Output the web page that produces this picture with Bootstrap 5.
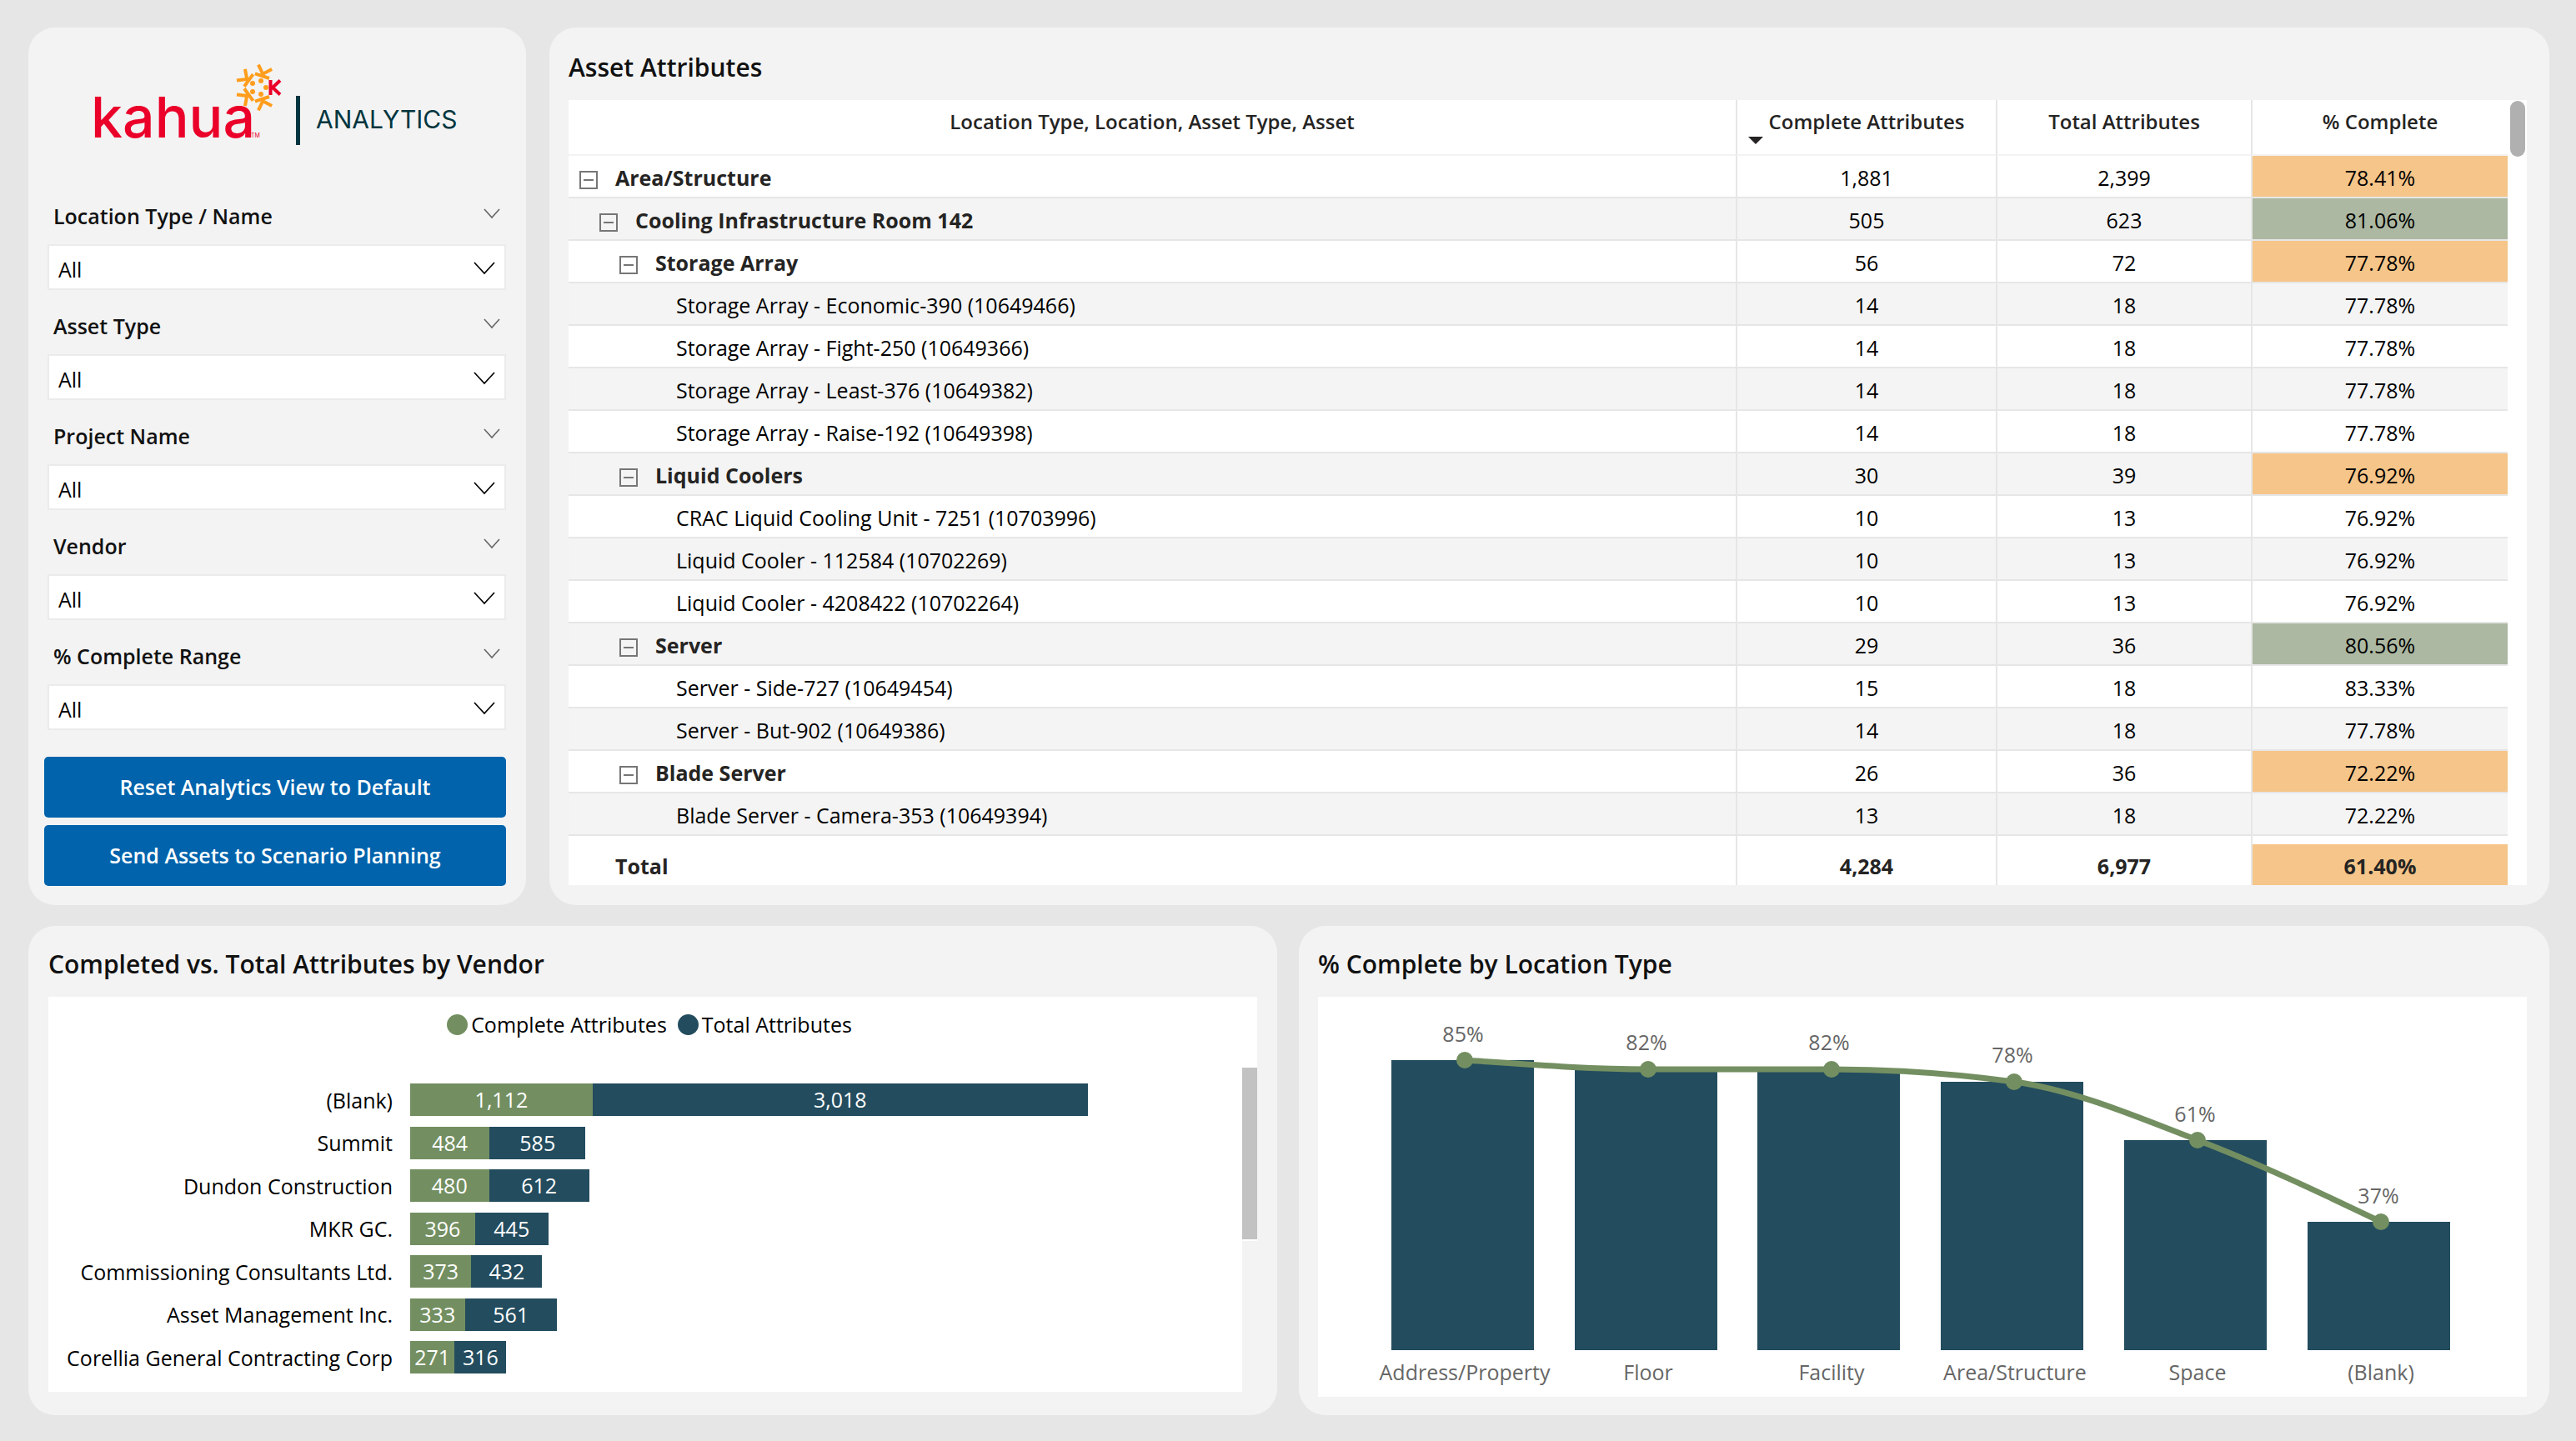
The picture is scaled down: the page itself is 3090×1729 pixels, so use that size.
<!DOCTYPE html>
<html lang="en">
<head>
<meta charset="utf-8">
<meta name="viewport" content="width=device-width, initial-scale=1">
<title>Kahua Analytics</title>
<link href="https://cdn.jsdelivr.net/npm/bootstrap@5.3.0/dist/css/bootstrap.min.css" rel="stylesheet">
<style>
  :root { --green: #738f61; --navy: #234c5e; --line: #e6e6e6; }
  body { background: #e6e6e6; color: #111; font-family: "Open Sans", "Noto Sans", sans-serif; font-size: 25px; line-height: 34px; }
  .page { padding: 33px 32px 31px 34px; }
  .top-row { gap: 28px; margin-bottom: 25px; }
  .bottom-row { gap: 26px; }
  .panel { background: #f3f3f3; border-radius: 32px; }
  .panel-title { margin: 0; font-size: 30px; line-height: 40px; font-weight: 600; color: #111; }
  .sidebar { width: 597px; flex: none; padding: 0 24px 23px 19px; }
  .brand-logo { display: block; height: 195px; width: 554px; }
  .filter { height: 132px; padding-left: 4px; }
  .filter-head { height: 65px; padding: 14px 7px 0 7px; font-weight: 600; }
  .filter-head label { line-height: 34px; }
  .icon-button { background: none; border: 0; padding: 0; line-height: 0; }
  .filter-select { height: 55px; border: 2px solid #ebebeb; border-radius: 0; background: #fff none; color: #000; font-size: 25px; padding: 6px 50px 0 11px; }
  .select-arrow { position: absolute; right: 13px; top: 21px; pointer-events: none; }
  .action-btn { height: 73px; border-radius: 5px; background: #0063ac; color: #fff; font-size: 25px; font-weight: 600; border: 0; }
  .action-btn:hover { background: #005493; color: #fff; }
  .actions { gap: 9px; padding-top: 20px; }

  .table-panel { padding: 0 27px 24px 23px; min-width: 0; }
  .table-panel .panel-title { height: 87px; padding-top: 28px; }
  .asset-table { table-layout: fixed; --bs-table-bg: transparent; border-collapse: separate; border-spacing: 0; color: #000; }
  .asset-table > :not(caption) > * > * { padding: 0; border: 0; box-shadow: none; vertical-align: middle; text-align: center; }
  .asset-table > :not(caption) > * > * + * { border-left: 2px solid var(--line); }
  .asset-table > thead > tr > th { position: relative; height: 67px; border-bottom: 2px solid #f3f3f3; font-size: 24px; font-weight: 600; color: #252423; vertical-align: top; padding-top: 9px; }
  .asset-table > tbody > tr > * { height: 51px; border-bottom: 2px solid var(--line); padding-top: 2px; }
  .asset-table > tbody > tr:nth-child(even) > * { background: #f4f4f4; }
  .asset-table > * > tr > .ok.ok { background: #acb8a1; }
  .asset-table > * > tr > .warn.warn { background: #f5c589; }
  .asset-table > * > tr > th[scope=row] { text-align: left; font-weight: 700; color: #252423; }
  .asset-table > tbody > tr > th.leaf { font-weight: 400; color: #000; padding-left: 129px; }
  .asset-table > tbody > tr > .lv1 { padding-left: 13px; }
  .asset-table > tbody > tr > .lv2 { padding-left: 37px; }
  .asset-table > tbody > tr > .lv3 { padding-left: 61px; }
  .asset-table > tfoot > tr > * { height: 49px; font-weight: 700; color: #252423; padding-top: 3px; }
  .asset-table > tfoot > tr > th[scope=row] { padding-left: 56px; }
  .asset-table > tfoot > tr.spacer > * { height: 10px; padding: 0; }
  .toggle { width: 22px; height: 22px; border: 2px solid #767676; background: none; padding: 0; margin-right: 21px; display: inline-flex; align-items: center; justify-content: center; vertical-align: middle; }
  .toggle::before { content: ""; width: 12px; height: 2px; background: #767676; }
  .sort-mark { position: absolute; left: 13px; top: 44px; }
  .table-scroll { width: 23px; flex: none; }
  .table-thumb { width: 18px; height: 67px; margin: 1px 0 0 3px; border-radius: 9px; background: #b0b0b0; }

  .chart-panel { flex: 1 1 0; min-width: 0; padding: 0 24px 22px 24px; }
  .chart-panel .panel-title { height: 85px; padding-top: 26px; }
  .location-panel { padding: 0 27px 22px 23px; }
  .vendor-plot { height: 474px; }
  .legend-row { height: 85px; padding-top: 16px; gap: 13px; color: #000; }
  .legend-dot { width: 25px; height: 25px; border-radius: 50%; }
  .bars { padding: 19px 0 22px; }
  .vendor-name { width: 413px; flex: none; text-align: right; color: #000; }
  .bar-row { height: 39px; gap: 21px; }
  .bar-seg { height: 39px; color: #fff; line-height: 38px; text-align: center; }
  .seg-green { background: var(--green); }
  .seg-navy { background: var(--navy); }
  .vendor-scroll { width: 18px; flex: none; background: #f3f3f3; }
  .vendor-thumb { height: 208px; background: #c2c2c2; border-bottom: 2px solid #fff; }
  .chart-text { font-size: 25px; fill: #666; text-anchor: middle; }
</style>
</head>
<body>
<div class="page">
  <div class="top-row d-flex">
    <aside class="panel sidebar">
      <svg class="brand-logo" viewBox="0 0 554 195" role="img" aria-label="kahua Analytics">
        <text x="56" y="132" font-family="Inter, sans-serif" font-size="68" font-weight="500" fill="#ea0029">kahua</text>
        <text x="248" y="132" font-family="Inter, sans-serif" font-size="7" fill="#ea0029">TM</text>
        <defs>
          <g id="petal"><path d="M14.500-9V9M26-8.500L17 0L26 8.500" fill="none" stroke-width="4"/></g>
        </defs>
        <g transform="translate(257 72)">
          <g stroke="#ff9d1c" fill="#ff9d1c">
            <use href="#petal" transform="rotate(72)"/><use href="#petal" transform="rotate(144)"/>
            <use href="#petal" transform="rotate(216)"/><use href="#petal" transform="rotate(288)"/>
          </g>
          <use href="#petal" stroke="#ea0029"/>
          <g fill="#ff9d1c"><circle cx="9" cy="0" r="3"/><circle cx="3" cy="-8" r="3"/><circle cx="-7" cy="-5" r="3"/><circle cx="-7" cy="5" r="3"/><circle cx="3" cy="8" r="3"/></g>
        </g>
        <rect x="302" y="82" width="5" height="59" fill="#00363f"/>
        <text x="326" y="121" font-family="Inter, sans-serif" font-size="30" fill="#00363f">ANALYTICS</text>
      </svg>

      <div class="filter">
        <div class="filter-head d-flex justify-content-between"><label for="f1">Location Type / Name</label>
          <button class="icon-button align-self-start pt-2" aria-label="Collapse location filter"><svg width="20" height="13" viewBox="0 0 20 13"><path d="M1 1L10 11L19 1" fill="none" stroke="#666" stroke-width="1.600"/></svg></button></div>
        <div class="position-relative"><select id="f1" class="form-select filter-select"><option>All</option></select>
          <svg class="select-arrow" width="26" height="16" viewBox="0 0 26 16"><path d="M1 1L13 14L25 1" fill="none" stroke="#000" stroke-width="1.700"/></svg></div>
      </div>
      <div class="filter">
        <div class="filter-head d-flex justify-content-between"><label for="f2">Asset Type</label>
          <button class="icon-button align-self-start pt-2" aria-label="Collapse asset type filter"><svg width="20" height="13" viewBox="0 0 20 13"><path d="M1 1L10 11L19 1" fill="none" stroke="#666" stroke-width="1.600"/></svg></button></div>
        <div class="position-relative"><select id="f2" class="form-select filter-select"><option>All</option></select>
          <svg class="select-arrow" width="26" height="16" viewBox="0 0 26 16"><path d="M1 1L13 14L25 1" fill="none" stroke="#000" stroke-width="1.700"/></svg></div>
      </div>
      <div class="filter">
        <div class="filter-head d-flex justify-content-between"><label for="f3">Project Name</label>
          <button class="icon-button align-self-start pt-2" aria-label="Collapse project filter"><svg width="20" height="13" viewBox="0 0 20 13"><path d="M1 1L10 11L19 1" fill="none" stroke="#666" stroke-width="1.600"/></svg></button></div>
        <div class="position-relative"><select id="f3" class="form-select filter-select"><option>All</option></select>
          <svg class="select-arrow" width="26" height="16" viewBox="0 0 26 16"><path d="M1 1L13 14L25 1" fill="none" stroke="#000" stroke-width="1.700"/></svg></div>
      </div>
      <div class="filter">
        <div class="filter-head d-flex justify-content-between"><label for="f4">Vendor</label>
          <button class="icon-button align-self-start pt-2" aria-label="Collapse vendor filter"><svg width="20" height="13" viewBox="0 0 20 13"><path d="M1 1L10 11L19 1" fill="none" stroke="#666" stroke-width="1.600"/></svg></button></div>
        <div class="position-relative"><select id="f4" class="form-select filter-select"><option>All</option></select>
          <svg class="select-arrow" width="26" height="16" viewBox="0 0 26 16"><path d="M1 1L13 14L25 1" fill="none" stroke="#000" stroke-width="1.700"/></svg></div>
      </div>
      <div class="filter">
        <div class="filter-head d-flex justify-content-between"><label for="f5">% Complete Range</label>
          <button class="icon-button align-self-start pt-2" aria-label="Collapse range filter"><svg width="20" height="13" viewBox="0 0 20 13"><path d="M1 1L10 11L19 1" fill="none" stroke="#666" stroke-width="1.600"/></svg></button></div>
        <div class="position-relative"><select id="f5" class="form-select filter-select"><option>All</option></select>
          <svg class="select-arrow" width="26" height="16" viewBox="0 0 26 16"><path d="M1 1L13 14L25 1" fill="none" stroke="#000" stroke-width="1.700"/></svg></div>
      </div>
      <div class="actions d-flex flex-column">
        <button type="button" class="btn action-btn">Reset Analytics View to Default</button>
        <button type="button" class="btn action-btn">Send Assets to Scenario Planning</button>
      </div>
    </aside>

    <section class="panel table-panel flex-grow-1">
      <h2 class="panel-title">Asset Attributes</h2>
      <div class="d-flex bg-white">
        <table class="table asset-table mb-0">
          <colgroup><col><col style="width:312px"><col style="width:306px"><col style="width:308px"></colgroup>
          <thead><tr><th scope="col">Location Type, Location, Asset Type, Asset</th>
            <th scope="col">Complete Attributes<svg class="sort-mark" width="18" height="9" viewBox="0 0 18 9"><path d="M0 0H18L9 9Z" fill="#252423"/></svg></th>
            <th scope="col">Total Attributes</th><th scope="col">% Complete</th></tr></thead>
          <tbody>
            <tr><th scope="row" class="lv1"><button class="toggle" aria-label="Collapse"></button>Area/Structure</th><td>1,881</td><td>2,399</td><td class="warn">78.41%</td></tr>
            <tr><th scope="row" class="lv2"><button class="toggle" aria-label="Collapse"></button>Cooling Infrastructure Room 142</th><td>505</td><td>623</td><td class="ok">81.06%</td></tr>
            <tr><th scope="row" class="lv3"><button class="toggle" aria-label="Collapse"></button>Storage Array</th><td>56</td><td>72</td><td class="warn">77.78%</td></tr>
            <tr><th scope="row" class="leaf">Storage Array - Economic-390 (10649466)</th><td>14</td><td>18</td><td>77.78%</td></tr>
            <tr><th scope="row" class="leaf">Storage Array - Fight-250 (10649366)</th><td>14</td><td>18</td><td>77.78%</td></tr>
            <tr><th scope="row" class="leaf">Storage Array - Least-376 (10649382)</th><td>14</td><td>18</td><td>77.78%</td></tr>
            <tr><th scope="row" class="leaf">Storage Array - Raise-192 (10649398)</th><td>14</td><td>18</td><td>77.78%</td></tr>
            <tr><th scope="row" class="lv3"><button class="toggle" aria-label="Collapse"></button>Liquid Coolers</th><td>30</td><td>39</td><td class="warn">76.92%</td></tr>
            <tr><th scope="row" class="leaf">CRAC Liquid Cooling Unit - 7251 (10703996)</th><td>10</td><td>13</td><td>76.92%</td></tr>
            <tr><th scope="row" class="leaf">Liquid Cooler - 112584 (10702269)</th><td>10</td><td>13</td><td>76.92%</td></tr>
            <tr><th scope="row" class="leaf">Liquid Cooler - 4208422 (10702264)</th><td>10</td><td>13</td><td>76.92%</td></tr>
            <tr><th scope="row" class="lv3"><button class="toggle" aria-label="Collapse"></button>Server</th><td>29</td><td>36</td><td class="ok">80.56%</td></tr>
            <tr><th scope="row" class="leaf">Server - Side-727 (10649454)</th><td>15</td><td>18</td><td>83.33%</td></tr>
            <tr><th scope="row" class="leaf">Server - But-902 (10649386)</th><td>14</td><td>18</td><td>77.78%</td></tr>
            <tr><th scope="row" class="lv3"><button class="toggle" aria-label="Collapse"></button>Blade Server</th><td>26</td><td>36</td><td class="warn">72.22%</td></tr>
            <tr><th scope="row" class="leaf">Blade Server - Camera-353 (10649394)</th><td>13</td><td>18</td><td>72.22%</td></tr>
          </tbody>
          <tfoot>
            <tr class="spacer"><td></td><td></td><td></td><td></td></tr>
            <tr><th scope="row">Total</th><td>4,284</td><td>6,977</td><td class="warn">61.40%</td></tr>
          </tfoot>
        </table>
        <div class="table-scroll"><div class="table-thumb"></div></div>
      </div>
    </section>
  </div>

  <div class="bottom-row d-flex">
    <section class="panel chart-panel">
      <h2 class="panel-title">Completed vs. Total Attributes by Vendor</h2>
      <div class="vendor-plot bg-white d-flex flex-column">
        <div class="legend-row d-flex justify-content-center align-items-start pe-2">
          <span class="d-flex align-items-center gap-1"><span class="legend-dot seg-green"></span>Complete Attributes</span>
          <span class="d-flex align-items-center gap-1"><span class="legend-dot seg-navy"></span>Total Attributes</span>
        </div>
        <div class="d-flex flex-grow-1">
          <div class="bars flex-grow-1 d-flex flex-column justify-content-between">
            <div class="bar-row d-flex align-items-center"><div class="vendor-name">(Blank)</div><div class="d-flex flex-grow-1"><div class="bar-seg seg-green" style="width:21.93%">1,112</div><div class="bar-seg seg-navy" style="width:59.51%">3,018</div></div></div>
            <div class="bar-row d-flex align-items-center"><div class="vendor-name">Summit</div><div class="d-flex flex-grow-1"><div class="bar-seg seg-green" style="width:9.54%">484</div><div class="bar-seg seg-navy" style="width:11.54%">585</div></div></div>
            <div class="bar-row d-flex align-items-center"><div class="vendor-name">Dundon Construction</div><div class="d-flex flex-grow-1"><div class="bar-seg seg-green" style="width:9.47%">480</div><div class="bar-seg seg-navy" style="width:12.07%">612</div></div></div>
            <div class="bar-row d-flex align-items-center"><div class="vendor-name">MKR GC.</div><div class="d-flex flex-grow-1"><div class="bar-seg seg-green" style="width:7.81%">396</div><div class="bar-seg seg-navy" style="width:8.78%">445</div></div></div>
            <div class="bar-row d-flex align-items-center"><div class="vendor-name">Commissioning Consultants Ltd.</div><div class="d-flex flex-grow-1"><div class="bar-seg seg-green" style="width:7.36%">373</div><div class="bar-seg seg-navy" style="width:8.52%">432</div></div></div>
            <div class="bar-row d-flex align-items-center"><div class="vendor-name">Asset Management Inc.</div><div class="d-flex flex-grow-1"><div class="bar-seg seg-green" style="width:6.57%">333</div><div class="bar-seg seg-navy" style="width:11.06%">561</div></div></div>
            <div class="bar-row d-flex align-items-center"><div class="vendor-name">Corellia General Contracting Corp</div><div class="d-flex flex-grow-1"><div class="bar-seg seg-green" style="width:5.34%">271</div><div class="bar-seg seg-navy" style="width:6.23%">316</div></div></div>
          </div>
          <div class="vendor-scroll"><div class="vendor-thumb"></div></div>
        </div>
      </div>
    </section>

    <section class="panel chart-panel location-panel">
      <h2 class="panel-title">% Complete by Location Type</h2>
      <svg class="d-block w-100 bg-white" viewBox="0 0 1450 480" role="img" aria-label="% Complete by Location Type">
        <g fill="#234c5e">
          <rect x="88" y="76" width="171" height="348"/><rect x="308" y="87" width="171" height="337"/><rect x="527" y="87" width="171" height="337"/>
          <rect x="747" y="102" width="171" height="322"/><rect x="967" y="172" width="171" height="252"/><rect x="1187" y="270" width="171" height="154"/>
        </g>
        <path d="M176 76C249 81 323 87 396 87C469 87 543 87 616 87C689 87 762 92 835 102C908 112 982 144 1055 172C1128 200 1202 235 1275 270" fill="none" stroke="#738f61" stroke-width="7"/>
        <g fill="#738f61"><circle cx="176" cy="76" r="10"/><circle cx="396" cy="87" r="10"/><circle cx="616" cy="87" r="10"/><circle cx="835" cy="102" r="10"/><circle cx="1055" cy="172" r="10"/><circle cx="1275" cy="270" r="10"/></g>
        <g class="chart-text">
          <text x="174" y="54">85%</text><text x="394" y="64">82%</text><text x="613" y="64">82%</text><text x="833" y="79">78%</text><text x="1052" y="150">61%</text><text x="1272" y="248">37%</text>
          <text x="176" y="460">Address/Property</text><text x="396" y="460">Floor</text><text x="616" y="460">Facility</text><text x="836" y="460">Area/Structure</text><text x="1055" y="460">Space</text><text x="1275" y="460">(Blank)</text>
        </g>
      </svg>
    </section>
  </div>
</div>
<script src="https://cdn.jsdelivr.net/npm/bootstrap@5.3.0/dist/js/bootstrap.bundle.min.js"></script>
</body>
</html>
